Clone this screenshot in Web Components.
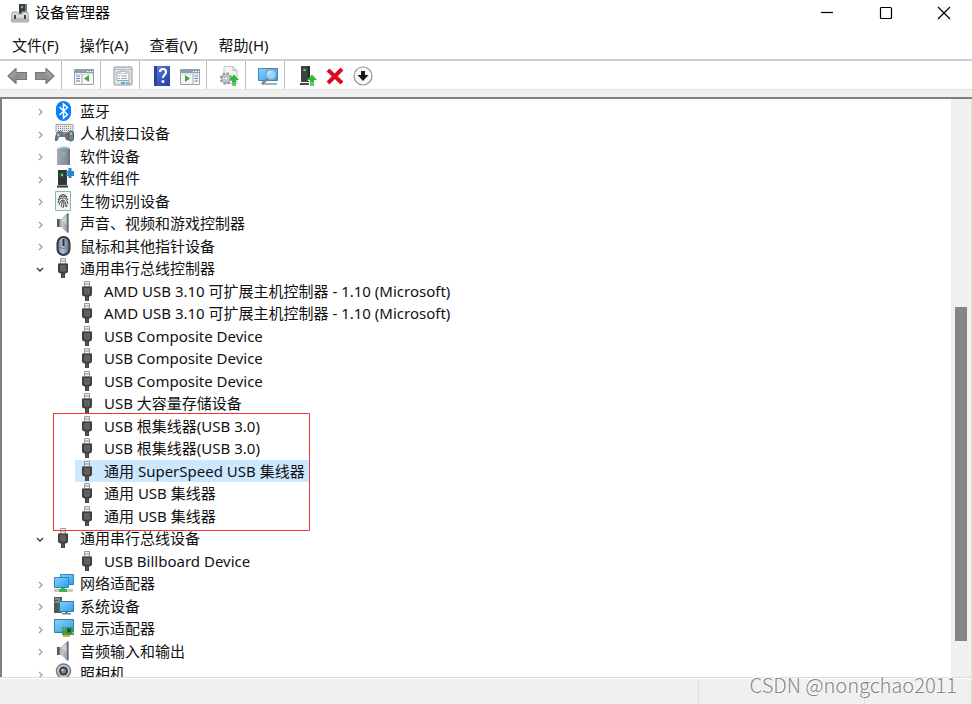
<!DOCTYPE html>
<html lang="zh-CN">
<head>
<meta charset="UTF-8">
<meta name="viewport" content="width=device-width, initial-scale=1">
<title>设备管理器</title>
<style>
    body {
        margin: 0;
        height: 100vh;
        overflow: hidden;
        font-family: "Noto Sans", "Noto Sans CJK SC", sans-serif;
        font-size: 15px;
        color: #111;
        background: #fff;
    }
</style>
</head>
<body>
<device-manager>
    <title-bar slot="title" icon="manager">设备管理器</title-bar>
    <menu-bar slot="menu" items="文件(F),操作(A),查看(V),帮助(H)"></menu-bar>
    <tool-bar slot="tools"></tool-bar>
    <device-tree slot="content"></device-tree>
    <status-bar slot="status"></status-bar>
    <water-mark slot="mark">CSDN @nongchao2011</water-mark>
</device-manager>

<script>
// ====================================================================
// ** Icons (20 x 20) **
// ====================================================================
const arrow = `<path d="M1 10 9 2.5V6.5H19.5V13.5H9V17.5Z" fill="url(#g)" stroke="#777" stroke-width="1.2" stroke-linejoin="round"/>`;
const metal = `<linearGradient id="g" x2="1" y2="1"><stop stop-color="#c2c2c2"/><stop offset=".5" stop-color="#8b8b8b"/><stop offset="1" stop-color="#a5a5a5"/></linearGradient>`;
const blue = `<linearGradient id="b" x2="1" y2="1"><stop stop-color="#86d2fb"/><stop offset="1" stop-color="#2c9fee"/></linearGradient>`;
const frame = `<path d="M.5 3.5h19v15H.5z" fill="#f6f7f8" stroke="#98a0a8"/><path d="M1 4h18v3H1z" fill="#8f9eac"/><path d="M13 5.5h1.5m1 0H17m1 0h1" stroke="#fff"/><path d="M1 8h18" stroke="#c8d0d6"/>`;
const upArrow = `<path d="M15 8.5 20 14h-3v2h-4v-2h-3z" fill="#2dbd31"/><path d="M13 17h4m-4 2h4" stroke="#2dbd31" stroke-width="1.3"/>`;
const speaker = `<linearGradient id="s"><stop stop-color="#777d84"/><stop offset=".45" stop-color="#c3c9cf"/><stop offset="1" stop-color="#888f97"/></linearGradient><path d="M3 6h4l6-5.5h1.5v19H13L7 14H3Z" fill="url(#s)"/><path d="M3 6h2.5v8H3z" fill="#555b61"/><path d="M13 .5h1.5v19H13z" fill="#666e76"/><path d="m7.5 7 5-4.5v9z" fill="#d7dce0" opacity=".7"/>`;

const ICONS = {
    manager: `<path d="M9 1h8v11H9z" fill="#3a3d3f"/><path d="M15 1h2v11h-2z" fill="#777"/><circle cx="12" cy="4" r="1.2" fill="#4fd35b"/><path d="M2.5 9H8v2h4V9h5.5l1 3v7H1.5v-7z" fill="#dadada" stroke="#aaa"/><path d="M2 15h16v4H2z" fill="#b5b7b9"/><path d="M4 12h2v4H4zm10 0h2v4h-2z" fill="#454749"/>`,
    back: metal + arrow,
    forward: metal + `<g transform="matrix(-1 0 0 1 20 0)">${arrow}</g>`,
    panel: frame + `<path d="M2 10h4M2 12.5h4M2 15h4" stroke="#5585b5" stroke-width="1.2"/><path d="M8 8v10" stroke="#a6aeb5"/><path d="M15 9v7l-5-3.5z" fill="#3cac24"/>`,
    action: frame + `<path d="M14.5 10h3.5m-3.5 2.5h3.5M14.5 15h3.5" stroke="#5585b5" stroke-width="1.2"/><path d="M13 8v10" stroke="#a6aeb5"/><path d="M5 9v7l5-3.5z" fill="#3cac24"/>`,
    properties: `<rect x="1" y="1" width="18" height="18" rx="1" fill="#e1e4e6" stroke="#8e979f"/><path d="M2 3.5h16" stroke="#b6bec4"/><path d="M4 14.5V6h4V5h4v1h4v8.5z" fill="#fff" stroke="#9ba6af"/><path d="M5 7.5h10" stroke="#c5ccd1"/><path d="M8 10h6m-6 2.5h6" stroke="#788c9d" stroke-width=".8"/><path d="M5.5 10H7m-1.5 2.500H7" stroke="#27b7dc"/><path d="M8 17h4" stroke="#25bce4" stroke-width="2"/><path d="M13 17h4" stroke="#8fb1bf" stroke-width="2"/>`,
    help: `<linearGradient id="h" x2="1" y2="1"><stop stop-color="#6783dd"/><stop offset=".5" stop-color="#3c5bc4"/><stop offset="1" stop-color="#253fa0"/></linearGradient><path d="M2 0h16v20H2z" fill="url(#h)"/><path d="M2 0h3v20H2z" fill="#29459f"/><path d="M8 6q0-3 3-3t3 3q0 1.6-1.6 3T11 12" fill="none" stroke="#fff" stroke-width="2.2"/><circle cx="11" cy="15.5" r="1.5" fill="#fff"/>`,
    update: `<path d="M5 .5h9l4 4v13H5z" fill="#f2f3f3" stroke="#c5c7c8"/><path d="M14 .5v4h4" fill="#ddd" stroke="#bbb"/><circle cx="7" cy="12.5" r="5" fill="#d2d5d6" stroke="#969a9d" stroke-width="2.5" stroke-dasharray="2.3 1.62"/><circle cx="7" cy="12.5" r="4" fill="#d9dcdd" stroke="#999da0"/><circle cx="7" cy="12.5" r="1.8" fill="#fff" stroke="#a3a7aa"/>${upArrow}`,
    scan: blue + `<path d="M.5 2.5h19v12H.5z" fill="url(#b)" stroke="#4187b6"/><path d="M4 18h15" stroke="#8099a8" stroke-width="1.5"/><path d="m10 12-6 6" stroke="#708b9d" stroke-width="2.5"/><circle cx="13" cy="8.5" r="5" fill="#a5dafa" fill-opacity=".85" stroke="#84a9c1" stroke-width="1.3"/><path d="M10 8.5q0-3 3-3" fill="none" stroke="#e4f6ff"/>`,
    enable: `<path d="M4 0h9v16H4z" fill="#3d4143"/><path d="M11 0h2v16h-2z" fill="#272a2c"/><path d="M3 17h10v2H3z" fill="#454a4d"/><circle cx="7.5" cy="4" r="1.3" fill="#3ce04a"/><path d="M10.5 15 15 8l5 6-3 3v3h-5v-5z" fill="#fff"/>${upArrow}`,
    remove: `<path d="m3 4 14 13M17 3 3 17" stroke="#d90b20" stroke-width="4"/>`,
    disable: `<circle cx="10" cy="10" r="9" fill="#f8f8f8" stroke="#929292" stroke-width="1.2"/><path d="M8 5h4v4h3.5L10 15 4.5 9H8z" fill="#151515"/>`,
    bluetooth: `<rect x="2" width="15" height="20" rx="7.5" fill="#0782f6"/><path d="m5.5 6 8 7.5-4 3.5V3l4 3.5-8 7.5" fill="none" stroke="#fff" stroke-width="1.5"/>`,
    hid: `<path d="M2 1.5h17v8H2z" fill="#e6e8e9" stroke="#9da1a5"/><path d="M4 3.5h13M4 5.5h13M4 7.5h13" stroke="#858a8f" stroke-dasharray="1 1"/><path d="M3 9q4-2 6 0t5 0l1 8q-3 2-4-3H5q-1 5-4 4-1-3 2-9z" fill="#6a737b"/><rect x="14.5" y="8" width="5" height="10" rx="2.5" fill="#75818b" stroke="#4d565e"/><path d="M17 9v3" stroke="#dce2e6"/><circle cx="7" cy="9.5" r="1.3" fill="#2f9de4"/><circle cx="10" cy="11" r="1.2" fill="#e46d4c"/><path d="M3 12h3m-1.5-1.5v3" stroke="#c8cfd4"/>`,
    software: `<linearGradient id="w" x2="1"><stop stop-color="#a3abb1"/><stop offset=".75" stop-color="#858f96"/><stop offset="1" stop-color="#687178"/></linearGradient><path d="M4 2q6-3 12 0v17H3V3z" fill="url(#w)"/><path d="M4 2.5q6-2 12 0" fill="none" stroke="#c9cfd2"/><circle cx="10" cy="8" r="1.7" fill="#4fcbdc"/>`,
    component: `<path d="M4 2h9v15H4z" fill="#343739"/><path d="M3 18.5h11" stroke="#343739" stroke-width="2"/><circle cx="8" cy="7" r="1.4" fill="#45e34c"/><path d="M12 3h2.5V0h3v3H20v5h-2.5v2h-3V8H12V6.5h1.5v-2H12z" fill="#2689ce"/>`,
    finger: `<path d="M1.5.5h15v19h-15z" fill="#f1f7f4" stroke="#8ab6a7"/><g fill="none" stroke="#444"><path d="M5 6q4-5 8 0M4 9q1-4 5-4t5 4M4 12q1-5 5-5t5 6M5 14q1-5 4-5t3 7M7 16q1-2 1-4t1-2 1 2-1 5M13 14q0 1-1 2"/></g>`,
    speaker,
    mouse: `<linearGradient id="m" x2="1"><stop stop-color="#63798c"/><stop offset=".4" stop-color="#b2c5d5"/><stop offset="1" stop-color="#596f82"/></linearGradient><rect x="3.500" y="1" width="12" height="18" rx="6" fill="url(#m)" stroke="#303840" stroke-width="2"/><path d="M9.5 3v7" stroke="#26313c" stroke-width="2"/><path d="M4 11q5 3 11 0" fill="none" stroke="#657a8c"/>`,
    usb: `<path d="M6.500.5h5V6h-5z" fill="#f3f3f3" stroke="#999"/><path d="M8 2v2M10 2v2" stroke="#888"/><path d="M4 5.500h10V13q0 2-3 2.500V20H7v-4.500Q4 15 4 13z" fill="#3f3f3f"/><path d="M6 7h6v5.500q0 1-3 1.500-3-.5-3-1.500z" fill="#606060"/><path d="M9 15.500V20" stroke="#666"/>`,
    network: blue + `<path d="M6.5 1.5h13v10h-13z" fill="url(#b)" stroke="#3184bd"/><path d="M.5 4.5h14v10H.5z" fill="url(#b)" stroke="#3184bd"/><path d="M0 17.500h19" stroke="#c5c9cc" stroke-width="3"/><path d="M7 15h4v1h2v3H5v-3h2z" fill="#34b44a"/>`,
    system: blue + `<path d="M0 1h8v16H0z" fill="#51585d"/><path d="M1 3h5M1 6h5" stroke="#b8c0c5"/><circle cx="5.5" cy="5" r="1" fill="#4bd858"/><path d="M5.5 5.5h14v10h-14z" fill="url(#b)" stroke="#33789f"/><path d="M11 16h3v1h3v1.500H8V17h3z" fill="#758791"/>`,
    display: blue + `<path d="M.5 1.5h19v13H.5z" fill="url(#b)" stroke="#387fa8"/><path d="M8 9h12v8H8z" fill="#3d9a58"/><path d="M13 10.500h4v4h-4z" fill="#175430"/><path d="M9 11h2m7 4h2" stroke="#9cdda1"/><path d="M9 18h7" stroke="#f4a32a" stroke-width="2"/>`,
    camera: `<path d="M5 17h9l2 3H3z" fill="#6f7478"/><circle cx="9.5" cy="8" r="7" fill="#c9cdd0" stroke="#777c80" stroke-width="1.500"/><circle cx="9.5" cy="8" r="4.5" fill="#3a4046"/><circle cx="9.5" cy="8" r="2.5" fill="#6a8ba8"/><circle cx="8.5" cy="7" r="1" fill="#dcebf5"/>`
};

class DeviceIcon extends HTMLElement {
    connectedCallback() {
        this.attachShadow({ mode: 'open' }).innerHTML = `
            <style>
                :host { display: block; flex: none; width: 20px; height: 20px; }
                svg { display: block; width: 100%; height: 100%; }
            </style>
            <svg viewBox="0 0 20 20" aria-hidden="true">${ICONS[this.getAttribute('name')]}</svg>
        `;
    }
}
customElements.define('device-icon', DeviceIcon);

// ====================================================================
// ** Title bar **
// ====================================================================
class TitleBar extends HTMLElement {
    connectedCallback() {
        this.attachShadow({ mode: 'open' }).innerHTML = `
            <style>
                :host { display: flex; align-items: center; height: 26px; padding-left: 10px; color: #000; line-height: 20px; }
                .name { flex: 1; padding: 0 0 2px 5px; }
                button { width: 59px; height: 26px; padding: 0; border: 0; background: none; display: grid; place-items: center; }
                button:last-child { width: 57px; }
                button:hover { background: #e5e5e5; }
                svg { width: 14px; height: 14px; fill: none; stroke: #000; stroke-width: 1.2; }
            </style>
            <device-icon name="${this.getAttribute('icon')}"></device-icon>
            <span class="name"><slot></slot></span>
            <button aria-label="最小化"><svg viewBox="0 0 14 14"><path d="M1 6.5h12"/></svg></button>
            <button aria-label="最大化"><svg viewBox="0 0 14 14"><rect x="1.5" y="1.5" width="11" height="11" rx="1"/></svg></button>
            <button aria-label="关闭"><svg viewBox="0 0 14 14"><path d="m1 1 12 12M13 1 1 13"/></svg></button>
        `;
    }
}
customElements.define('title-bar', TitleBar);

// ====================================================================
// ** Menu bar **
// ====================================================================
class MenuBar extends HTMLElement {
    connectedCallback() {
        const items = this.getAttribute('items').split(',');
        this.attachShadow({ mode: 'open' }).innerHTML = `
            <style>
                :host { display: block; border-bottom: 2px solid #cdcdd0; }
                nav { display: flex; gap: 1px; padding: 5px 2px 1px; }
                button { height: 27px; padding: 0 10px; border: 0; background: none; color: inherit; font: inherit; }
                button:hover { background: #e5f3ff; }
            </style>
            <nav>${items.map(item => `<button>${item}</button>`).join('')}</nav>
        `;
    }
}
customElements.define('menu-bar', MenuBar);

// ====================================================================
// ** Tool bar **
// ====================================================================
const TOOLS = [
    [['back', '后退'], ['forward', '前进']],
    [['panel', '显示/隐藏控制台树']],
    [['properties', '属性']],
    [['help', '帮助'], ['action', '显示/隐藏操作窗格']],
    [['update', '更新驱动程序']],
    [['scan', '扫描检测硬件改动']],
    [['enable', '启用设备'], ['remove', '卸载设备'], ['disable', '禁用设备']]
];

class ToolBar extends HTMLElement {
    connectedCallback() {
        this.attachShadow({ mode: 'open' }).innerHTML = `
            <style>
                :host { display: flex; height: 28px; padding-left: 3px; border-bottom: 1px solid #e3e3e3; }
                .group { display: flex; padding-right: 2px; }
                .group + .group { padding-left: 8px; border-left: 1px solid #bdbdbd; }
                button { width: 28px; padding: 2px 0 0; border: 0; background: none; display: grid; place-items: center; }
                button:hover { background: #e5f3ff; }
            </style>
            ${TOOLS.map(group => `<div class="group">${group.map(([icon, label]) =>
                `<button aria-label="${label}"><device-icon name="${icon}"></device-icon></button>`).join('')}</div>`).join('')}
        `;
    }
}
customElements.define('tool-bar', ToolBar);

// ====================================================================
// ** Tree **
// ====================================================================
class TreeRow extends HTMLElement {
    connectedCallback() {
        const state = this.getAttribute('state');
        const chevron = state === 'open' ? 'm3 5 3 3 3-3' : 'm5 4 3 3-3 3';
        const toggle = state
            ? `<button aria-label="${state === 'open' ? '折叠' : '展开'}"><svg viewBox="0 0 12 12"><path d="${chevron}"/></svg></button>`
            : '';
        this.attachShadow({ mode: 'open' }).innerHTML = `
            <style>
                :host { display: grid; grid-template-columns: 22px max-content; min-height: 0; line-height: 22px; }
                :host([level="1"]) { padding-left: 24px; }
                button { padding: 0; border: 0; background: none; display: grid; place-items: center; }
                svg { width: 12px; height: 12px; fill: none; stroke: #a0a0a0; stroke-width: 1.3; }
                :host([state="open"]) svg { stroke: #333; }
                .body { grid-column: 2; display: flex; align-items: center; gap: 6px; height: 22px; padding: 0 4px 0 3px; }
                :host([selected]) .body { background: #cce8ff; }
            </style>
            ${toggle}
            <div class="body"><device-icon name="${this.getAttribute('icon')}"></device-icon><slot></slot></div>
        `;
    }
}
customElements.define('tree-row', TreeRow);

const DEVICES = [
    { name: '蓝牙', icon: 'bluetooth' },
    { name: '人机接口设备', icon: 'hid' },
    { name: '软件设备', icon: 'software' },
    { name: '软件组件', icon: 'component' },
    { name: '生物识别设备', icon: 'finger' },
    { name: '声音、视频和游戏控制器', icon: 'speaker' },
    { name: '鼠标和其他指针设备', icon: 'mouse' },
    { name: '通用串行总线控制器', icon: 'usb', children: [
        'AMD USB 3.10 可扩展主机控制器 - 1.10 (Microsoft)',
        'AMD USB 3.10 可扩展主机控制器 - 1.10 (Microsoft)',
        'USB Composite Device',
        'USB Composite Device',
        'USB Composite Device',
        'USB 大容量存储设备',
        'USB 根集线器(USB 3.0)',
        'USB 根集线器(USB 3.0)',
        '通用 SuperSpeed USB 集线器',
        '通用 USB 集线器',
        '通用 USB 集线器'
    ] },
    { name: '通用串行总线设备', icon: 'usb', children: ['USB Billboard Device'] },
    { name: '网络适配器', icon: 'network' },
    { name: '系统设备', icon: 'system' },
    { name: '显示适配器', icon: 'display' },
    { name: '音频输入和输出', icon: 'speaker' },
    { name: '照相机', icon: 'camera' }
];
const SELECTED = '通用 SuperSpeed USB 集线器';

class DeviceTree extends HTMLElement {
    connectedCallback() {
        const rows = DEVICES.map(({ name, icon, children = [] }) => `
            <tree-row role="treeitem" level="0" state="${children.length ? 'open' : 'closed'}" icon="${icon}">${name}</tree-row>
            ${children.map(child => `<tree-row role="treeitem" level="1" icon="${icon}"${child === SELECTED ? ' selected' : ''}>${child}</tree-row>`).join('')}
        `).join('');
        this.attachShadow({ mode: 'open' }).innerHTML = `
            <style>
                :host { display: flex; height: 100%; box-sizing: border-box; border: solid #808080; border-width: 2px 0 0 2px; background: #fff; overflow: hidden; }
                .rows { position: relative; flex: 1; display: grid; grid-auto-rows: 22px 23px; align-content: start; padding: 1px 0 0 27px; }
                .mark { position: absolute; left: 51px; top: 314px; width: 255px; height: 116px; border: 1px solid #f03838; pointer-events: none; }
                .track { display: grid; grid-template-rows: 208fr 335fr 36fr; width: 12px; padding: 0 4px; border-right: 1px solid #e2e2e2; background: #f0f0f0; }
                .thumb { grid-row: 2; background: #858585; }
            </style>
            <div class="rows" role="tree">${rows}<div class="mark"></div></div>
            <div class="track"><div class="thumb"></div></div>
        `;
    }
}
customElements.define('device-tree', DeviceTree);

// ====================================================================
// ** Status bar and watermark **
// ====================================================================
class StatusBar extends HTMLElement {
    connectedCallback() {
        this.attachShadow({ mode: 'open' }).innerHTML = `
            <style>
                :host { display: flex; height: 23px; padding-top: 3px; border-top: 1px solid #dcdcdc; background: #f0f0f0; box-shadow: inset 0 1px #fff; }
                span { width: 106px; border-right: 1px solid #dcdcdc; }
                .main { flex: 1; }
                .wide { width: 165px; }
            </style>
            <span class="main"></span><span class="wide"></span><span></span>
        `;
    }
}
customElements.define('status-bar', StatusBar);

class WaterMark extends HTMLElement {
    connectedCallback() {
        this.attachShadow({ mode: 'open' }).innerHTML = `
            <style>
                :host {
                    position: absolute;
                    right: 15px;
                    bottom: 7px;
                    font-family: "Noto Sans CJK SC", sans-serif;
                    font-size: 20px;
                    font-weight: 300;
                    line-height: 24px;
                    color: #858585;
                    text-shadow: -1px -1px #fff;
                }
            </style>
            <slot></slot>
        `;
    }
}
customElements.define('water-mark', WaterMark);

// ====================================================================
// ** Window **
// ====================================================================
class DeviceManager extends HTMLElement {
    connectedCallback() {
        this.attachShadow({ mode: 'open' }).innerHTML = `
            <style>
                :host { position: relative; display: flex; flex-direction: column; height: 100vh; }
                main { flex: 1; min-height: 0; padding-top: 7px; background: #f0f0f0; }
            </style>
            <slot name="title"></slot>
            <slot name="menu"></slot>
            <slot name="tools"></slot>
            <main><slot name="content"></slot></main>
            <slot name="status"></slot>
            <slot name="mark"></slot>
        `;
    }
}
customElements.define('device-manager', DeviceManager);
</script>
</body>
</html>
